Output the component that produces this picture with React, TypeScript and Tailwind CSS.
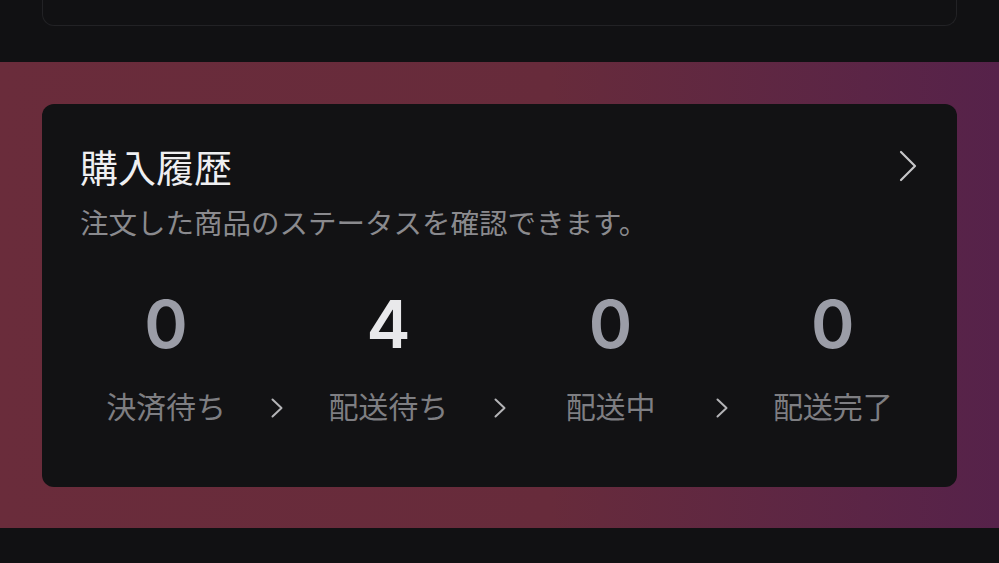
import React from "react";

const steps = [
  { count: 0, label: "決済待ち" },
  { count: 4, label: "配送待ち" },
  { count: 0, label: "配送中" },
  { count: 0, label: "配送完了" },
];

function Chevron({ className }: { className?: string }) {
  return (
    <svg viewBox="0 0 12 20" className={className} fill="none" stroke="currentColor" strokeWidth="2" strokeLinecap="round" strokeLinejoin="round">
      <polyline points="1.5,1.5 10.5,10 1.5,18.5" />
    </svg>
  );
}

export default function App() {
  return (
    <div className="flex h-[563px] w-full flex-col overflow-hidden bg-[#111113] font-['Noto_Sans_CJK_JP',sans-serif]">
      {/* previous card, cut off at the top */}
      <div className="h-[62px] px-[42px]">
        <div className="h-[26px] rounded-b-xl border border-t-0 border-[#222225] bg-[#111113]" />
      </div>

      {/* gradient band */}
      <div className="h-[466px] bg-linear-to-r from-[#6a2c3b] via-[#672b3b] via-55% to-[#56224a] px-[42px] pt-[42px]">
        <div className="h-[383px] rounded-xl bg-[#121214] pt-[40px]">
          {/* Header */}
          <div className="flex items-center justify-between pl-[38px] pr-[40px]">
            <h2 className="text-[38px] leading-[44px] font-normal text-[#efeff1]">購入履歴</h2>
            <svg viewBox="0 0 18 32" className="h-[32px] w-[18px] text-[#c6c6c8]" fill="none" stroke="currentColor" strokeWidth="2.2" strokeLinecap="round" strokeLinejoin="round">
              <polyline points="2,2 16,16 2,30" />
            </svg>
          </div>
          <p className="mt-[16px] pl-[38px] text-[28.5px] leading-[36px] text-[#8a8a8e]">
            注文した商品のステータスを確認できます。
          </p>

          {/* Status row */}
          <div className="mt-[51px] flex px-[21px]">
            {steps.map((s, i) => (
              <React.Fragment key={s.label}>
                <div className="flex flex-1 flex-col items-center">
                  <span
                    className={
                      "font-['Inter',sans-serif] text-[66px] leading-[66px] font-semibold " +
                      (s.count > 0 ? "text-[#e9e9eb]" : "text-[#9b9da7]")
                    }
                  >
                    {s.count}
                  </span>
                  <span className="mt-[30px] text-[30px] leading-[36px] text-[#7e7e82]">{s.label}</span>
                </div>
                {i < steps.length - 1 && (
                  <div className="flex w-4 flex-col items-center justify-end">
                    <div className="flex h-[36px] items-center pt-[5px]">
                      <Chevron className="h-[20px] w-[12px] text-[#b4b4b7]" />
                    </div>
                  </div>
                )}
              </React.Fragment>
            ))}
          </div>
        </div>
      </div>

      <div className="flex-1" />
    </div>
  );
}
